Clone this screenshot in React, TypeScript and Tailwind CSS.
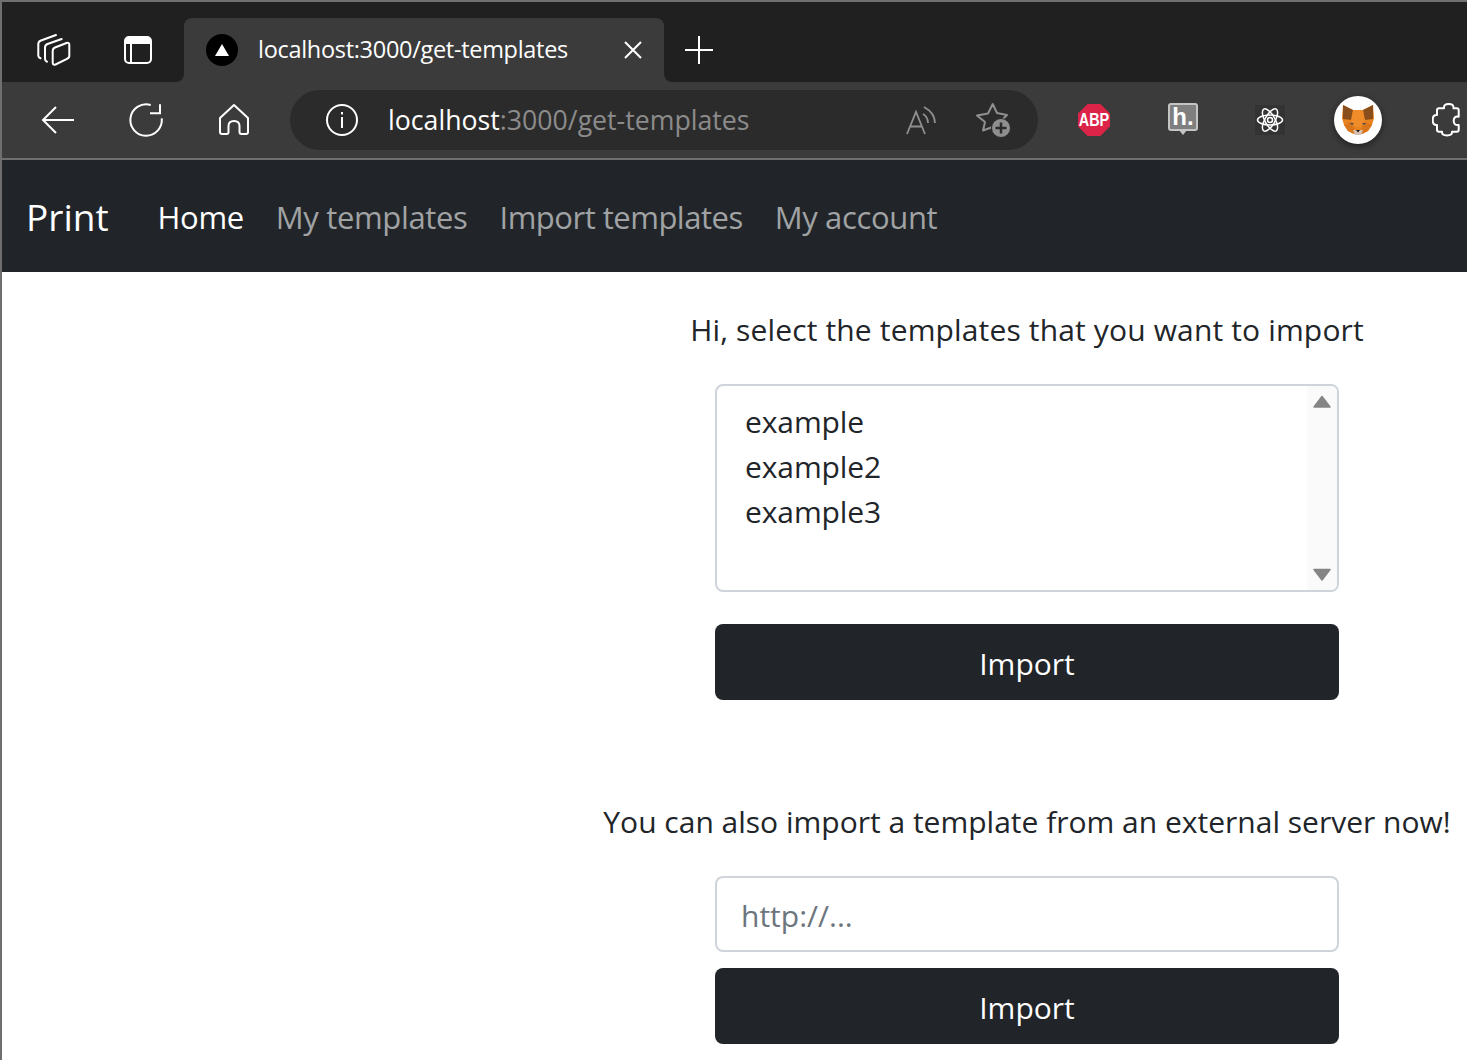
const uiFont = "font-['Open_Sans',sans-serif]";

function Fox() {
  return (
    <svg viewBox="0 0 32 31" className="w-[32px] h-[31px]">
      <path d="M1 0 L11 5 H21 L31 0 L32 13 L30 20 L26 26 L20 29 H12 L6 26 L2 20 L0 13 Z" fill="#e8821e" />
      <path d="M1 0 L11 5 L10 15 L1 14 Z" fill="#8a4e1c" />
      <path d="M31 0 L21 5 L22 15 L31 14 Z" fill="#8a4e1c" />
      <path d="M11 5 H21 L23 15 L19 22 H13 L9 15 Z" fill="#f08c2a" />
      <path d="M2 20 L9 17 L13 25 L12 29 L6 26 Z" fill="#d9761c" />
      <path d="M30 20 L23 17 L19 25 L20 29 L26 26 Z" fill="#d9761c" />
      <path d="M11 25 H21 L19 30 H13 Z" fill="#d7c1b3" />
      <path d="M14 25 H18 L16 27.5 Z" fill="#161616" />
      <path d="M8 18 L12 18 L10 20 Z" fill="#4a4a52" />
      <path d="M24 18 L20 18 L22 20 Z" fill="#4a4a52" />
    </svg>
  );
}

function BrowserChrome() {
  return (
    <div className={`${uiFont} border-t-2 border-l-2 border-[#6f6f6f]`}>
      {/* tab strip */}
      <div className="h-[80px] bg-[#202020] flex items-end">
        <div className="w-[92px] h-full flex items-center pt-[16px] pl-[35px]">
          <svg viewBox="0 0 34 34" className="w-[34px] h-[34px]" fill="none" stroke="white" strokeWidth="2" strokeLinecap="round" strokeLinejoin="round">
            <path d="M19 2 L4 7.5 Q1.3 8.7 1.3 11 V22.5 Q1.3 24.5 3.5 25.3" />
            <path d="M24.7 6 L10.5 11 Q8 12 8 14.5 V26 Q8 28 10 28.7" />
            <path d="M18 14.5 L29.5 10 Q32.3 9.3 32.3 12 V23 Q32.3 25 30 25.8 L18.5 31.5 Q15.7 32.5 15.7 29.5 V18 Q15.7 15.5 18 14.5 Z" />
          </svg>
        </div>
        <div className="w-[90px] h-full flex items-center justify-center pt-[16px] pr-[2px]">
          <svg viewBox="0 0 28 28" className="w-[28px] h-[28px]">
            <rect x="1" y="1" width="26" height="26" rx="4" fill="none" stroke="white" strokeWidth="2" />
            <path d="M1 8 V5 Q1 1 5 1 H23 Q27 1 27 5 V8 Z" fill="white" />
            <path d="M7 8 V27" stroke="white" strokeWidth="2" />
          </svg>
        </div>
        <div className="relative w-[480px] h-[64px] bg-[#3b3b3b] rounded-t-lg flex items-center pl-[22px] pr-[22px]">
          <div className="absolute -left-[8px] bottom-0 w-[8px] h-[8px] bg-[#3b3b3b]">
            <div className="w-full h-full bg-[#202020] rounded-br-lg" />
          </div>
          <div className="absolute -right-[8px] bottom-0 w-[8px] h-[8px] bg-[#3b3b3b]">
            <div className="w-full h-full bg-[#202020] rounded-bl-lg" />
          </div>
          <div className="w-[32px] h-[32px] rounded-full bg-black flex items-center justify-center">
            <svg viewBox="0 0 16 16" className="w-[16px] h-[16px]">
              <path d="M8 2 L15 14 H1 Z" fill="white" />
            </svg>
          </div>
          <span className="ml-[20px] flex-1 text-white text-[23.5px] tracking-[-0.3px] whitespace-nowrap">localhost:3000/get-templates</span>
          <svg viewBox="0 0 18 18" className="w-[18px] h-[18px]" stroke="white" strokeWidth="2">
            <path d="M1 1 L17 17 M17 1 L1 17" />
          </svg>
        </div>
        <div className="h-full flex items-center pt-[15px] pl-[20px]">
          <svg viewBox="0 0 30 30" className="w-[30px] h-[30px]" stroke="white" strokeWidth="2">
            <path d="M15 1 V29 M1 15 H29" />
          </svg>
        </div>
      </div>
      {/* toolbar */}
      <div className="h-[76px] bg-[#3b3b3b] flex items-center pl-[39px]">
        <svg viewBox="0 0 34 30" className="w-[34px] h-[30px] shrink-0" fill="none" stroke="white" strokeWidth="2">
          <path d="M33 15 H2 M15 2 L2 15 L15 28" />
        </svg>
        <svg viewBox="0 0 36 36" className="w-[36px] h-[36px] ml-[53px] shrink-0" fill="none" stroke="white" strokeWidth="2">
          <path d="M22.7 3 A15.7 15.7 0 1 0 33.7 16.3" />
          <path d="M22 11.3 H32 V2.3" />
        </svg>
        <svg viewBox="0 0 32 34" className="w-[32px] h-[34px] ml-[54px] shrink-0" fill="none" stroke="white" strokeWidth="2" strokeLinejoin="round">
          <path d="M16 2 L2 15 V29 Q2 31 4 31 H8.5 Q10.5 31 10.5 29 V23 Q10.5 18 16 18 Q21.5 18 21.5 23 V29 Q21.5 31 23.5 31 H28 Q30 31 30 29 V15 Z" />
        </svg>
        <div className="w-[748px] h-[60px] ml-[40px] shrink-0 bg-[#2b2b2b] rounded-[30px] flex items-center">
          <svg viewBox="0 0 34 34" className="w-[34px] h-[34px] ml-[35px]" fill="none" stroke="white" strokeWidth="2">
            <circle cx="17" cy="17" r="15" />
            <path d="M17 14 V25 M17 9 V11.5" />
          </svg>
          <div className="ml-[29px] pt-[1px] flex-1 text-[26.7px] whitespace-nowrap text-[#8b8b8b]">
            <span className="text-white">localhost</span>:3000/get-templates
          </div>
          <svg viewBox="0 0 32 30" className="w-[32px] h-[30px]" fill="none" stroke="#8f8f8f" strokeWidth="1.8">
            <path d="M2 29 L11 7 L20 29 M5 21.5 H17" />
            <path d="M18 9 Q23 12 23 18 M19 2 Q30 8 30 18" />
          </svg>
          <svg viewBox="0 0 36 36" className="w-[36px] h-[36px] ml-[38px] mr-[27px]">
            <path d="M17.7 2 L22 11 L32 13 L25 20 L26 29 L17.7 25 L8 28.5 L10 20 L2 13.5 L13 11.5 Z" fill="none" stroke="#8f8f8f" strokeWidth="2" strokeLinejoin="round" />
            <circle cx="26" cy="26" r="9.5" fill="#8f8f8f" stroke="#2b2b2b" strokeWidth="1" />
            <path d="M26 20.5 V31.5 M20.5 26 H31.5" stroke="#2b2b2b" strokeWidth="2.5" />
          </svg>
        </div>
        <div className="ml-[40px] w-[32px] h-[32px] shrink-0 bg-[#dc2449] [clip-path:polygon(30%_0,70%_0,100%_30%,100%_70%,70%_100%,30%_100%,0_70%,0_30%)] flex items-center justify-center overflow-hidden">
          <span className="font-['Liberation_Sans',sans-serif] font-bold text-white text-[18px] leading-none scale-x-[0.8]">ABP</span>
        </div>
        <div className="ml-[58px] w-[30px] h-[34px] shrink-0 relative">
          <div className="w-[30px] h-[28px] bg-[#7f7f7f] border-2 border-[#c4c4c4] rounded-[3px] flex items-end justify-center">
            <span className="font-['Liberation_Sans',sans-serif] font-bold text-white text-[24px] leading-[24px]">h.</span>
          </div>
          <div className="absolute left-[11px] top-[27px] w-[8px] h-[5px] bg-[#c4c4c4] [clip-path:polygon(0_0,100%_0,50%_100%)]" />
        </div>
        <div className="ml-[57px] w-[30px] h-[30px] shrink-0 bg-[#333] rounded-[2px] flex items-center justify-center">
          <svg viewBox="0 0 28 28" className="w-[28px] h-[28px]" fill="none" stroke="white" strokeWidth="1.5">
            <ellipse cx="14" cy="14" rx="12.5" ry="5" />
            <ellipse cx="14" cy="14" rx="12.5" ry="5" transform="rotate(60 14 14)" />
            <ellipse cx="14" cy="14" rx="12.5" ry="5" transform="rotate(120 14 14)" />
            <circle cx="14" cy="14" r="2.5" />
          </svg>
        </div>
        <div className="ml-[49px] w-[48px] h-[48px] shrink-0 rounded-full bg-white flex items-center justify-center shadow-[0_2px_6px_rgba(0,0,0,0.5)]">
          <Fox />
        </div>
        <div className="ml-[50px] w-[34px] h-[34px] shrink-0">
          <svg viewBox="0 0 34 34" className="w-[34px] h-[34px]" fill="none" stroke="white" strokeWidth="2" strokeLinejoin="round">
            <path d="M7 5.3 H12 Q11.5 1 16.7 1 Q22 1 21.5 5.3 H24.7 Q26.7 5.3 26.7 7.3 V13.7 Q21.7 13 21.7 17.8 Q21.7 22.7 26.7 22 V26.7 Q26.7 28.7 24.7 28.7 H20 Q20.5 32.5 15 32.5 Q9.5 32.5 10 28.7 H7 Q5 28.7 5 26.7 V22 Q0.7 22.5 0.7 17 Q0.7 11.5 5 12 V7.3 Q5 5.3 7 5.3 Z" />
          </svg>
        </div>
      </div>
      <div className="h-[2px] bg-[#6f6f6f]" />
    </div>
  );
}

function Navbar() {
  return (
    <nav className={`${uiFont} h-[112px] bg-[#212529] border-l-2 border-[#6f6f6f] flex items-center pl-[24px] pt-[2px]`}>
      <span className="text-white text-[37px] mr-[49px]">Print</span>
      <div className="flex gap-[32px] text-[31px] text-[#a0a2a4] tracking-[-0.35px]">
        <span className="text-white">Home</span>
        <span>My templates</span>
        <span className="tracking-[-0.5px]">Import templates</span>
        <span>My account</span>
      </div>
    </nav>
  );
}

function ImportButton() {
  return (
    <button className="w-[624px] h-[76px] pt-[2px] bg-[#212529] text-white text-[30px] rounded-lg">
      Import
    </button>
  );
}

export default function App() {
  return (
    <div className="h-[1060px] flex flex-col overflow-hidden bg-white">
      <BrowserChrome />
      <Navbar />
      <main className={`${uiFont} flex-1 border-l-2 border-[#6f6f6f] flex justify-end pr-[16px] text-[#212529]`}>
        <div className="w-[848px] flex flex-col items-center">
          <p className="mt-[35px] text-[30px] tracking-[0.15px] leading-[46px] whitespace-nowrap">Hi, select the templates that you want to import</p>
          <div className="mt-[31px] w-[624px] h-[208px] border-2 border-[#ced4da] rounded-lg flex overflow-hidden">
            <div className="flex-1 pl-[28px] pt-[13px] text-[30px] tracking-[-0.1px] leading-[45px]">
              <div>example</div>
              <div>example2</div>
              <div>example3</div>
            </div>
            <div className="w-[30px] bg-[#fafafa] flex flex-col justify-between items-center pt-[9px] pb-[9px]">
              <svg viewBox="0 0 18 13" className="w-[18px] h-[13px]">
                <path d="M9 1.5 L17 12 H1 Z" fill="#858585" stroke="#858585" strokeWidth="1.5" strokeLinejoin="round" />
              </svg>
              <svg viewBox="0 0 18 13" className="w-[18px] h-[13px]">
                <path d="M1 1.5 H17 L9 12 Z" fill="#858585" stroke="#858585" strokeWidth="1.5" strokeLinejoin="round" />
              </svg>
            </div>
          </div>
          <div className="mt-[32px]"><ImportButton /></div>
          <p className="mt-[99px] text-[30px] leading-[46px] whitespace-nowrap">You can also import a template from an external server now!</p>
          <input
            placeholder="http://..."
            className="mt-[31px] w-[624px] h-[76px] border-2 border-[#ced4da] rounded-lg pl-[24px] pt-[2px] text-[30px] placeholder:text-[#6c757d]"
          />
          <div className="mt-[16px]"><ImportButton /></div>
        </div>
      </main>
    </div>
  );
}
